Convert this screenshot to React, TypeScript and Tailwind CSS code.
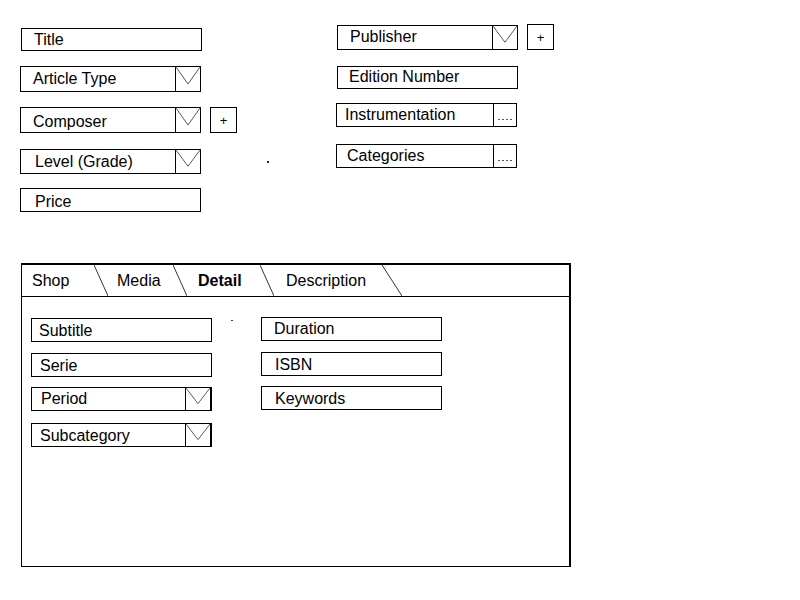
type Kind = "text" | "select" | "more";

function Arrow() {
  return (
    <svg viewBox="0 0 24 24" preserveAspectRatio="none" className="h-full w-full">
      <polyline points="0,0 12,17 24,0" fill="none" stroke="#555" strokeWidth="1" />
    </svg>
  );
}

function Field({
  label,
  kind = "text",
  h = 24,
  pl = 12,
  dy = 0,
  className = "",
}: {
  label: string;
  kind?: Kind;
  h?: number;
  pl?: number;
  dy?: number;
  className?: string;
}) {
  return (
    <div
      className={`flex w-[181px] shrink-0 border border-black bg-white ${className}`}
      style={{ height: h }}
    >
      <div
        className="flex flex-1 items-center whitespace-nowrap text-[16px]"
        style={{
          paddingLeft: pl,
          paddingTop: dy > 0 ? dy * 2 : 0,
          paddingBottom: dy < 0 ? -dy * 2 : 0,
        }}
      >
        {label}
      </div>
      {kind === "select" && (
        <div className="w-[25px] border-l border-black">
          <Arrow />
        </div>
      )}
      {kind === "more" && (
        <div className="flex w-[23px] items-end justify-center gap-[2px] border-l border-black pb-[6px] shadow-[1px_1px_0_#000]">
          <span className="h-[1px] w-[2px] bg-gray-600" />
          <span className="h-[1px] w-[2px] bg-gray-600" />
          <span className="h-[1px] w-[2px] bg-gray-600" />
          <span className="h-[1px] w-[2px] bg-gray-600" />
        </div>
      )}
    </div>
  );
}

function PlusButton({ className = "" }: { className?: string }) {
  return (
    <div
      className={`flex h-[26px] w-[27px] items-center justify-center border border-black text-[13px] leading-none ${className}`}
    >
      +
    </div>
  );
}

function Slant({ w }: { w: number }) {
  return (
    <svg width={w} height="31" viewBox={`0 0 ${w} 31`} className="shrink-0">
      <line x1="0" y1="0" x2={w} y2="31" stroke="#333" strokeWidth="1" />
    </svg>
  );
}

const TABS = [
  { label: "Shop", w: 72, pl: 10, sep: 14 },
  { label: "Media", w: 65, pl: 9, sep: 14 },
  { label: "Detail", w: 73, pl: 11, sep: 14, active: true },
  { label: "Description", w: 108, pl: 12, sep: 20 },
];

export default function App() {
  return (
    <div className="h-[600px] w-[800px] overflow-hidden bg-white font-['Liberation_Sans',Arial,sans-serif] text-black">
      <div className="flex">
        {/* left column */}
        <div className="ml-[20px] flex w-[316px] flex-col">
          <Field label="Title" h={23} pl={12} className="ml-[1px] mt-[28px]" />
          <Field label="Article Type" kind="select" h={26} pl={12} className="mt-[15px]" />
          <div className="mt-[15px] flex items-center">
            <Field label="Composer" kind="select" h={26} pl={12} dy={2} />
            <PlusButton className="ml-[9px]" />
          </div>
          <div className="mt-[16px] flex items-center">
            <Field label="Level (Grade)" kind="select" h={25} pl={14} />
            <span className="ml-[66px] h-[2px] w-[2px] bg-gray-800" />
          </div>
          <Field label="Price" h={24} pl={14} dy={2} className="mt-[14px]" />
        </div>

        {/* right column */}
        <div className="flex flex-col">
          <div className="ml-[1px] mt-[24px] flex items-center">
            <Field label="Publisher" kind="select" h={25} pl={12} />
            <PlusButton className="ml-[9px]" />
          </div>
          <Field label="Edition Number" h={23} pl={11} dy={-1} className="ml-[1px] mt-[16px]" />
          <Field label="Instrumentation" kind="more" h={24} pl={8} className="mt-[14px]" />
          <Field label="Categories" kind="more" h={24} pl={10} className="mt-[17px]" />
        </div>
      </div>

      {/* tab panel */}
      <div className="ml-[21px] mt-[51px] h-[304px] w-[550px] border border-r-2 border-t-2 border-black">
        <div className="flex h-[32px] border-b border-black">
          {TABS.map((t) => (
            <div key={t.label} className="flex">
              <div
                className={`flex items-center text-[16px] ${t.active ? "font-bold" : ""}`}
                style={{ width: t.w, paddingLeft: t.pl }}
              >
                {t.label}
              </div>
              <Slant w={t.sep} />
            </div>
          ))}
        </div>

        <div className="ml-[9px] mt-[20px] flex">
          <div className="mt-[1px] flex flex-col">
            <Field label="Subtitle" h={24} pl={7} dy={1} />
            <Field label="Serie" h={24} pl={8} dy={1} className="mt-[11px]" />
            <Field label="Period" kind="select" h={24} pl={9} className="mt-[10px] border-r-2" />
            <Field label="Subcategory" kind="select" h={24} pl={8} dy={1} className="mt-[12px] border-r-2" />
          </div>
          <div className="w-[49px]">
            <span className="ml-[19px] mt-[3px] block h-[1px] w-[2px] bg-gray-700" />
          </div>
          <div className="flex flex-col">
            <Field label="Duration" h={24} pl={12} />
            <Field label="ISBN" h={24} pl={13} dy={1} className="mt-[11px]" />
            <Field label="Keywords" h={24} pl={13} dy={1} className="mt-[10px]" />
          </div>
        </div>
      </div>
    </div>
  );
}
